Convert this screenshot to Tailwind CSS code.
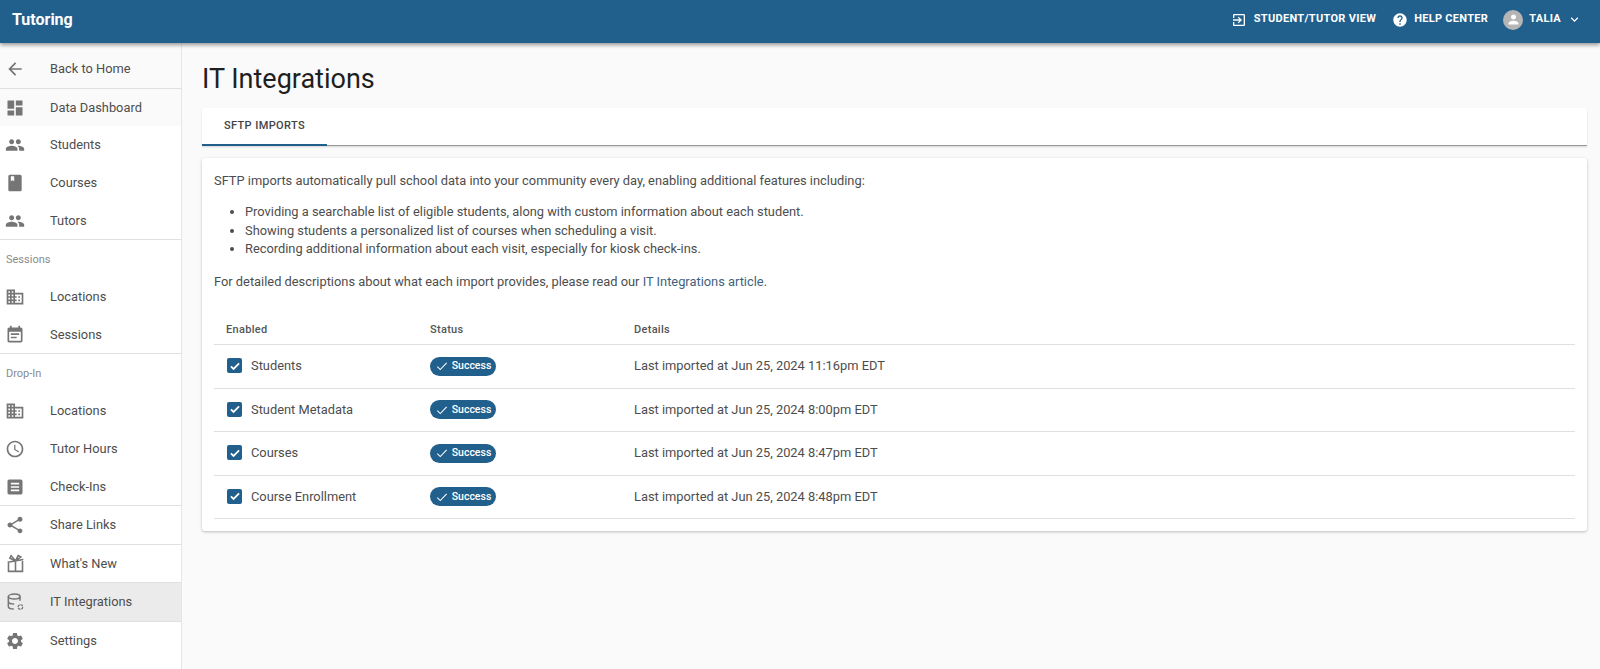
<!DOCTYPE html>
<html lang="en">
<head>
  <meta charset="UTF-8" />
  <title>IT Integrations</title>
  <script src="https://cdn.jsdelivr.net/npm/@tailwindcss/browser@4"></script>
</head>
<body class="h-[669px] overflow-hidden bg-[#fafafa] font-['Roboto',sans-serif] text-[12.85px] text-[#4d4d4d]">
  <!-- Top bar -->
  <header class="relative z-10 flex h-[43px] items-center justify-between bg-[#215f8c] pb-[4px] pl-3 pr-[18px] text-white shadow-[0_2px_4px_rgba(0,0,0,0.4)]">
    <div class="text-[16px] font-bold">Tutoring</div>
    <div class="flex items-center text-[11px] font-bold tracking-[0.3px]">
      <svg class="mr-[7px] h-[16px] w-[16px]" viewBox="0 0 24 24" fill="white"><path d="M10.09 15.59 11.5 17l5-5-5-5-1.41 1.41L12.67 11H3v2h9.67l-2.58 2.59zM19 3H5c-1.11 0-2 .9-2 2v4h2V5h14v14H5v-4H3v4c0 1.1.89 2 2 2h14c1.1 0 2-.9 2-2V5c0-1.1-.9-2-2-2z"/></svg>
      <span>STUDENT/TUTOR VIEW</span>
      <svg class="ml-[16px] mr-[6px] h-[16px] w-[16px]" viewBox="0 0 24 24" fill="white"><path d="M12 2C6.48 2 2 6.48 2 12s4.48 10 10 10 10-4.48 10-10S17.52 2 12 2zm1 17h-2v-2h2v2zm2.07-7.75-.9.92C13.45 12.9 13 13.5 13 15h-2v-.5c0-1.1.45-2.1 1.17-2.83l1.24-1.26c.37-.36.59-.86.59-1.41 0-1.1-.9-2-2-2s-2 .9-2 2H8c0-2.21 1.79-4 4-4s4 1.79 4 4c0 .88-.36 1.68-.93 2.25z"/></svg>
      <span>HELP CENTER</span>
      <span class="ml-[15px] mr-[6px] flex h-[20px] w-[20px] items-center justify-center rounded-full bg-[#b5b5b5]">
        <svg class="h-[15px] w-[15px]" viewBox="0 0 24 24" fill="white"><path d="M12 12c2.21 0 4-1.79 4-4s-1.79-4-4-4-4 1.79-4 4 1.79 4 4 4zm0 2c-2.67 0-8 1.34-8 4v2h16v-2c0-2.66-5.33-4-8-4z"/></svg>
      </span>
      <span>TALIA</span>
      <svg class="ml-[6px] h-[15px] w-[15px]" viewBox="0 0 24 24" fill="white"><path d="M7.41 8.59 12 13.17l4.59-4.58L18 10l-6 6-6-6z"/></svg>
    </div>
  </header>

  <div class="flex h-[626px]">
    <!-- Sidebar -->
    <nav class="w-[182px] shrink-0 border-r border-[#e6e6e6] bg-white">
      <a class="flex h-[46px] items-center border-b border-[#e0e0e0] bg-[#fafafa] pt-[6px]">
        <span class="flex w-[50px] justify-center pr-[20px]"><svg class="h-[20px] w-[20px]" viewBox="0 0 24 24" fill="#757575"><path d="M20 11H7.83l5.59-5.59L12 4l-8 8 8 8 1.41-1.41L7.83 13H20v-2z"/></svg></span>Back to Home
      </a>
      <a class="flex h-[37px] items-center bg-[#fafafa]">
        <span class="flex w-[50px] justify-center pr-[20px]"><svg class="h-[20px] w-[20px]" viewBox="0 0 24 24" fill="#757575"><path d="M3 13h8V3H3v10zm0 8h8v-6H3v6zm10 0h8V11h-8v10zm0-18v6h8V3h-8z"/></svg></span>Data Dashboard
      </a>
      <a class="flex h-[38px] items-center">
        <span class="flex w-[50px] justify-center pr-[20px]"><svg class="h-[20px] w-[20px]" viewBox="0 0 24 24" fill="#757575"><path d="M16 11c1.66 0 2.99-1.34 2.99-3S17.66 5 16 5c-1.66 0-3 1.34-3 3s1.34 3 3 3zm-8 0c1.66 0 2.99-1.34 2.99-3S9.66 5 8 5C6.34 5 5 6.34 5 8s1.34 3 3 3zm0 2c-2.33 0-7 1.17-7 3.5V19h14v-2.5c0-2.33-4.67-3.5-7-3.5zm8 0c-.29 0-.62.02-.97.05 1.16.84 1.97 1.97 1.97 3.45V19h6v-2.5c0-2.33-4.67-3.5-7-3.5z"/></svg></span>Students
      </a>
      <a class="flex h-[38px] items-center">
        <span class="flex w-[50px] justify-center pr-[20px]"><svg class="h-[20px] w-[20px]" viewBox="0 0 24 24" fill="#757575"><path d="M18 2H6c-1.1 0-2 .9-2 2v16c0 1.1.9 2 2 2h12c1.1 0 2-.9 2-2V4c0-1.1-.9-2-2-2zM7 4h4v6L9 8.800 7 10V4z"/></svg></span>Courses
      </a>
      <a class="flex h-[37px] items-center">
        <span class="flex w-[50px] justify-center pr-[20px]"><svg class="h-[20px] w-[20px]" viewBox="0 0 24 24" fill="#757575"><path d="M16 11c1.66 0 2.99-1.34 2.99-3S17.66 5 16 5c-1.66 0-3 1.34-3 3s1.34 3 3 3zm-8 0c1.66 0 2.99-1.34 2.99-3S9.66 5 8 5C6.34 5 5 6.34 5 8s1.34 3 3 3zm0 2c-2.33 0-7 1.17-7 3.5V19h14v-2.5c0-2.33-4.67-3.5-7-3.5zm8 0c-.29 0-.62.02-.97.05 1.16.84 1.97 1.97 1.97 3.45V19h6v-2.5c0-2.33-4.67-3.5-7-3.5z"/></svg></span>Tutors
      </a>
      <div class="h-[39px] border-t border-[#e0e0e0] pl-[6px] pt-[12px] text-[11px] leading-[15px] text-[#8a8a8a]">Sessions</div>
      <a class="flex h-[38px] items-center">
        <span class="flex w-[50px] justify-center pr-[20px]"><svg class="h-[20px] w-[20px]" viewBox="0 0 24 24" fill="#757575"><path d="M12 7V3H2v18h20V7H12zM6 19H4v-2h2v2zm0-4H4v-2h2v2zm0-4H4V9h2v2zm0-4H4V5h2v2zm4 12H8v-2h2v2zm0-4H8v-2h2v2zm0-4H8V9h2v2zm0-4H8V5h2v2zm10 12h-8v-2h2v-2h-2v-2h2v-2h-2V9h8v10zm-2-8h-2v2h2v-2zm0 4h-2v2h2v-2z"/></svg></span>Locations
      </a>
      <a class="flex h-[37px] items-center">
        <span class="flex w-[50px] justify-center pr-[20px]"><svg class="h-[20px] w-[20px]" viewBox="0 0 24 24" fill="#757575"><path d="M17 10H7v2h10v-2zm2-7h-1V1h-2v2H8V1H6v2H5c-1.11 0-1.99.9-1.99 2L3 19c0 1.1.89 2 2 2h14c1.1 0 2-.9 2-2V5c0-1.1-.9-2-2-2zm0 16H5V8h14v11zm-5-5H7v2h7v-2z"/></svg></span>Sessions
      </a>
      <div class="h-[39px] border-t border-[#e0e0e0] pl-[6px] pt-[12px] text-[11px] leading-[15px] text-[#8a8a8a]">Drop-In</div>
      <a class="flex h-[38px] items-center">
        <span class="flex w-[50px] justify-center pr-[20px]"><svg class="h-[20px] w-[20px]" viewBox="0 0 24 24" fill="#757575"><path d="M12 7V3H2v18h20V7H12zM6 19H4v-2h2v2zm0-4H4v-2h2v2zm0-4H4V9h2v2zm0-4H4V5h2v2zm4 12H8v-2h2v2zm0-4H8v-2h2v2zm0-4H8V9h2v2zm0-4H8V5h2v2zm10 12h-8v-2h2v-2h-2v-2h2v-2h-2V9h8v10zm-2-8h-2v2h2v-2zm0 4h-2v2h2v-2z"/></svg></span>Locations
      </a>
      <a class="flex h-[38px] items-center">
        <span class="flex w-[50px] justify-center pr-[20px]"><svg class="h-[20px] w-[20px]" viewBox="0 0 24 24" fill="#757575"><path d="M11.99 2C6.47 2 2 6.48 2 12s4.47 10 9.99 10C17.52 22 22 17.52 22 12S17.52 2 11.99 2zM12 20c-4.42 0-8-3.58-8-8s3.58-8 8-8 8 3.58 8 8-3.58 8-8 8zm.5-13H11v6l5.25 3.15.75-1.23-4.5-2.67V7z"/></svg></span>Tutor Hours
      </a>
      <a class="flex h-[37px] items-center">
        <span class="flex w-[50px] justify-center pr-[20px]"><svg class="h-[20px] w-[20px]" viewBox="0 0 24 24" fill="#757575"><path d="M19 3H5c-1.1 0-2 .9-2 2v14c0 1.1.9 2 2 2h14c1.1 0 2-.9 2-2V5c0-1.1-.9-2-2-2zm-2 14H7v-2h10v2zm0-4H7v-2h10v2zm0-4H7V7h10v2z"/></svg></span>Check-Ins
      </a>
      <a class="flex h-[39px] items-center border-t border-[#e0e0e0]">
        <span class="flex w-[50px] justify-center pr-[20px]"><svg class="h-[20px] w-[20px]" viewBox="0 0 24 24" fill="#757575"><path d="M18 16.08c-.76 0-1.44.3-1.96.77L8.91 12.7c.05-.23.09-.46.09-.7s-.04-.47-.09-.7l7.05-4.11c.54.5 1.25.81 2.04.81 1.66 0 3-1.34 3-3s-1.34-3-3-3-3 1.34-3 3c0 .24.04.47.09.7L8.04 9.81C7.5 9.31 6.79 9 6 9c-1.66 0-3 1.34-3 3s1.34 3 3 3c.79 0 1.5-.31 2.04-.81l7.12 4.16c-.05.21-.08.43-.08.65 0 1.61 1.31 2.92 2.92 2.92 1.61 0 2.92-1.31 2.92-2.92s-1.31-2.92-2.92-2.92z"/></svg></span>Share Links
      </a>
      <a class="flex h-[38px] items-center border-t border-[#e0e0e0]">
        <span class="flex w-[50px] justify-center pr-[20px]"><svg class="h-[21px] w-[21px]" viewBox="0 0 24 24" fill="none" stroke="#757575" stroke-width="1.800"><path d="M3 10.500 21 7.500M4 10.500V21h16V9M12 9.500V21M12 9.200 5.500 6l1.500-3zM12 9.200l3-6.200 3 1.500z"/></svg></span>What's New
      </a>
      <a class="flex h-[40px] items-center border-y border-[#e0e0e0] bg-[#ebebeb]">
        <span class="flex w-[50px] justify-center pr-[20px]"><svg class="h-[20px] w-[20px]" viewBox="0 0 24 24" fill="none" stroke="#757575" stroke-width="1.800"><ellipse cx="11" cy="5.500" rx="7" ry="3"/><path d="M4 5.500v12c0 1.700 3 3 6.500 3M4 11.500c0 1.700 3 3 7 3M18 5.500v5"/><circle cx="18.500" cy="18" r="2.800" stroke-width="1.500" stroke-dasharray="3 1"/></svg></span>IT Integrations
      </a>
      <a class="flex h-[38px] items-center">
        <span class="flex w-[50px] justify-center pr-[20px]"><svg class="h-[20px] w-[20px]" viewBox="0 0 24 24" fill="#757575"><path d="M19.14 12.94c.04-.3.06-.61.06-.94 0-.32-.02-.64-.07-.94l2.03-1.58c.18-.14.23-.41.12-.61l-1.92-3.32c-.12-.22-.37-.29-.59-.22l-2.39.96c-.5-.38-1.03-.7-1.62-.94l-.36-2.54c-.04-.24-.24-.41-.48-.41h-3.84c-.24 0-.43.17-.47.41l-.36 2.54c-.59.24-1.13.57-1.62.94l-2.39-.96c-.22-.08-.47 0-.59.22L2.74 8.870c-.12.21-.08.47.12.61l2.03 1.58c-.05.3-.09.63-.09.94s.02.64.07.94l-2.03 1.58c-.18.14-.23.41-.12.61l1.92 3.32c.12.22.37.29.59.22l2.39-.96c.5.38 1.03.7 1.62.94l.36 2.54c.05.24.24.41.48.41h3.84c.24 0 .44-.17.47-.41l.36-2.54c.59-.24 1.13-.56 1.62-.94l2.39.96c.22.08.47 0 .59-.22l1.92-3.32c.12-.22.07-.47-.12-.61l-2.01-1.58zM12 15.600c-1.980 0-3.600-1.620-3.600-3.600s1.620-3.600 3.600-3.600 3.600 1.620 3.600 3.600-1.620 3.600-3.600 3.600z"/></svg></span>Settings
      </a>
    </nav>

    <!-- Main -->
    <main class="flex-1 pl-[20px] pr-[13px]">
      <h1 class="pt-[21px] text-[27px] leading-[30px] text-[#1f1f1f]">IT Integrations</h1>
      <div class="mt-[14px] flex h-[38px] rounded-t-[3px] border-b border-[#9a9a9a] bg-white shadow-[0_1px_2px_rgba(0,0,0,0.15)]">
        <div class="mb-[-1px] flex w-[125px] items-center justify-center border-b-2 border-[#215f8c] text-[11px] font-medium tracking-[0.4px] text-[#444]">SFTP IMPORTS</div>
      </div>
      <section class="mt-[12px] h-[373px] rounded-[3px] bg-white px-[12px] pt-[15px] shadow-[0_1px_3px_rgba(0,0,0,0.25)]">
        <p class="leading-[16px]">SFTP imports automatically pull school data into your community every day, enabling additional features including:</p>
        <ul class="mt-[14px] list-disc pl-[31px] leading-[18.5px]">
          <li>Providing a searchable list of eligible students, along with custom information about each student.</li>
          <li>Showing students a personalized list of courses when scheduling a visit.</li>
          <li>Recording additional information about each visit, especially for kiosk check-ins.</li>
        </ul>
        <p class="mt-[15px] leading-[16px]">For detailed descriptions about what each import provides, please read our <a class="text-[#3f5f80]">IT Integrations article</a>.</p>
        <div class="mt-[27px] grid h-[28px] grid-cols-[204px_204px_1fr] items-center border-b border-[#e0e0e0] pl-[12px] text-[11px] font-medium tracking-[0.3px] text-[#555]">
          <span>Enabled</span><span>Status</span><span>Details</span>
        </div>
        <div class="grid h-[44px] grid-cols-[204px_204px_1fr] items-center border-b border-[#e0e0e0] pl-[13px]">
          <span class="flex items-center gap-[9px]"><span class="flex h-[15px] w-[15px] items-center justify-center rounded-[2px] bg-[#215f8c]"><svg class="h-[14px] w-[14px]" viewBox="0 0 24 24" fill="none" stroke="white" stroke-width="3"><path d="M5 12.500l4.500 4.500L19 7.500"/></svg></span>Students</span>
          <span class="-ml-[1px] flex h-[19px] w-[66px] items-center justify-center gap-[3px] rounded-full bg-[#215f8c] text-[10.5px] font-medium text-white"><svg class="h-[14px] w-[14px]" viewBox="0 0 24 24" fill="none" stroke="white" stroke-width="1.800"><path d="M4 13l5 5L20 6.500"/></svg>Success</span>
          <span class="-ml-[1px]">Last imported at Jun 25, 2024 11:16pm EDT</span>
        </div>
        <div class="grid h-[43px] grid-cols-[204px_204px_1fr] items-center border-b border-[#e0e0e0] pl-[13px]">
          <span class="flex items-center gap-[9px]"><span class="flex h-[15px] w-[15px] items-center justify-center rounded-[2px] bg-[#215f8c]"><svg class="h-[14px] w-[14px]" viewBox="0 0 24 24" fill="none" stroke="white" stroke-width="3"><path d="M5 12.500l4.500 4.500L19 7.500"/></svg></span>Student Metadata</span>
          <span class="-ml-[1px] flex h-[19px] w-[66px] items-center justify-center gap-[3px] rounded-full bg-[#215f8c] text-[10.5px] font-medium text-white"><svg class="h-[14px] w-[14px]" viewBox="0 0 24 24" fill="none" stroke="white" stroke-width="1.800"><path d="M4 13l5 5L20 6.500"/></svg>Success</span>
          <span class="-ml-[1px]">Last imported at Jun 25, 2024 8:00pm EDT</span>
        </div>
        <div class="grid h-[44px] grid-cols-[204px_204px_1fr] items-center border-b border-[#e0e0e0] pl-[13px]">
          <span class="flex items-center gap-[9px]"><span class="flex h-[15px] w-[15px] items-center justify-center rounded-[2px] bg-[#215f8c]"><svg class="h-[14px] w-[14px]" viewBox="0 0 24 24" fill="none" stroke="white" stroke-width="3"><path d="M5 12.500l4.500 4.500L19 7.500"/></svg></span>Courses</span>
          <span class="-ml-[1px] flex h-[19px] w-[66px] items-center justify-center gap-[3px] rounded-full bg-[#215f8c] text-[10.5px] font-medium text-white"><svg class="h-[14px] w-[14px]" viewBox="0 0 24 24" fill="none" stroke="white" stroke-width="1.800"><path d="M4 13l5 5L20 6.500"/></svg>Success</span>
          <span class="-ml-[1px]">Last imported at Jun 25, 2024 8:47pm EDT</span>
        </div>
        <div class="grid h-[43px] grid-cols-[204px_204px_1fr] items-center border-b border-[#e0e0e0] pl-[13px]">
          <span class="flex items-center gap-[9px]"><span class="flex h-[15px] w-[15px] items-center justify-center rounded-[2px] bg-[#215f8c]"><svg class="h-[14px] w-[14px]" viewBox="0 0 24 24" fill="none" stroke="white" stroke-width="3"><path d="M5 12.500l4.500 4.500L19 7.500"/></svg></span>Course Enrollment</span>
          <span class="-ml-[1px] flex h-[19px] w-[66px] items-center justify-center gap-[3px] rounded-full bg-[#215f8c] text-[10.5px] font-medium text-white"><svg class="h-[14px] w-[14px]" viewBox="0 0 24 24" fill="none" stroke="white" stroke-width="1.800"><path d="M4 13l5 5L20 6.500"/></svg>Success</span>
          <span class="-ml-[1px]">Last imported at Jun 25, 2024 8:48pm EDT</span>
        </div>
      </section>
    </main>
  </div>
</body>
</html>
